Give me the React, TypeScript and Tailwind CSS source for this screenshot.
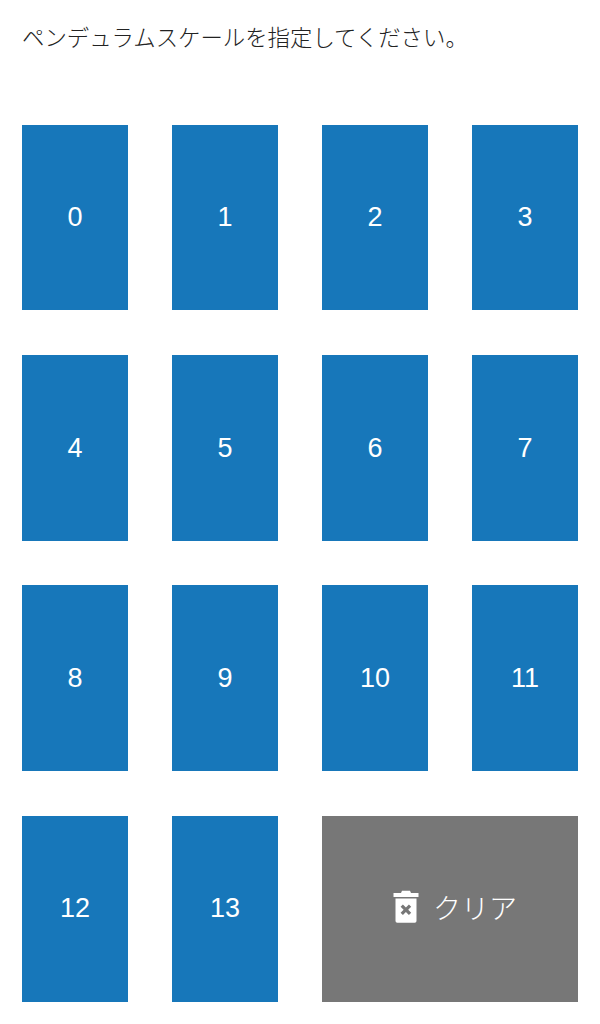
const cell = "flex items-center justify-center bg-[#1777ba] text-[27px] text-white h-full";

export default function App() {
  const nums = Array.from({ length: 14 }, (_, i) => i);
  return (
    <div className="w-[600px] h-[1024px] bg-white px-[22px] font-['Liberation_Sans','Noto_Sans_CJK_JP',sans-serif] overflow-hidden">
      <p className="pt-[20px] h-[124.5px] text-[22.4px] leading-[32px] font-light text-[#222222] font-['Noto_Sans_CJK_JP',sans-serif]">
        ペンデュラムスケールを指定してください。
      </p>
      <div className="grid grid-cols-4 gap-x-[44px] gap-y-[44.5px] auto-rows-[185.9px]">
        {nums.map((n) => (
          <div key={n} className={cell}>
            {n}
          </div>
        ))}
        <div className="col-span-2 h-full flex items-center justify-center gap-[14px] pl-[10px] bg-[#777777] text-white">
          <svg width="26" height="33" viewBox="0 0 26 33" className="shrink-0 -translate-y-[2px]" aria-hidden="true">
            <path fill="white" d="M0.500 3h7.500l1-2.200h8l1 2.200h7.500v4h-25z" />
            <path fill="white" fillRule="evenodd" d="M2.500 8.500h21v22.500a1.800 1.800 0 0 1-1.800 1.800H4.300a1.800 1.800 0 0 1-1.800-1.800zM9.900 14.500l-2.300 2.300 3 3-3 3 2.300 2.300 3-3 3 3 2.300-2.300-3-3 3-3-2.300-2.300-3 3z" />
          </svg>
          <span className="text-[28px] font-light font-['Noto_Sans_CJK_JP',sans-serif] leading-none -translate-y-[2px]">クリア</span>
        </div>
      </div>
    </div>
  );
}
